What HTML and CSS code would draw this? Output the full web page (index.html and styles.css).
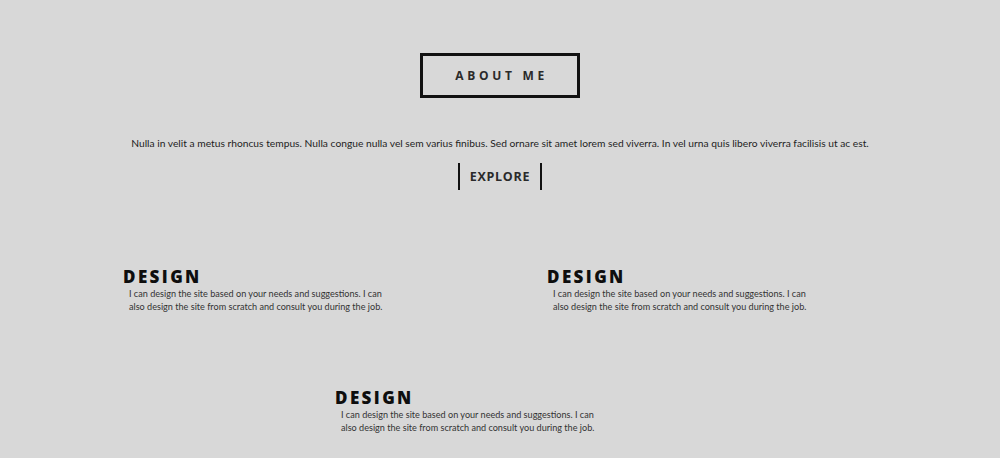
FILE: index.html
```html
<!DOCTYPE html>
<html>
<head>
<meta charset="utf-8">
<link rel="stylesheet" href="styles.css">
</head>
<body>
<section class="about">
  <h1 class="title">ABOUT ME</h1>
  <p class="intro">Nulla in velit a metus rhoncus tempus. Nulla congue nulla vel sem varius finibus. Sed ornare sit amet lorem sed viverra. In vel urna quis libero viverra facilisis ut ac est.</p>
  <a class="explore">EXPLORE</a>
</section>
<section class="services">
  <div class="service">
    <h2>DESIGN</h2>
    <p>I can design the site based on your needs and suggestions. I can also design the site from scratch and consult you during the job.</p>
  </div>
  <div class="service">
    <h2>DESIGN</h2>
    <p>I can design the site based on your needs and suggestions. I can also design the site from scratch and consult you during the job.</p>
  </div>
  <div class="service">
    <h2>DESIGN</h2>
    <p>I can design the site based on your needs and suggestions. I can also design the site from scratch and consult you during the job.</p>
  </div>
</section>
</body>
</html>
```
FILE: styles.css
```css
html, body {
  margin: 0;
  padding: 0;
  background: #d8d8d8;
  height: 100%;
}
body {
  font-family: "Open Sans", "Liberation Sans", sans-serif;
  color: #222;
  overflow: hidden;
}
.about {
  display: flex;
  flex-direction: column;
  align-items: center;
  padding-top: 53px;
}
.title {
  margin: 0;
  width: 151px;
  height: 39px;
  box-sizing: content-box;
  border: 3px solid #111;
  display: flex;
  align-items: center;
  justify-content: center;
  font-size: 12px;
  font-weight: 700;
  letter-spacing: 3.7px;
  padding-left: 3px;
  color: #2a2a2a;
}
.intro {
  margin: 37px 0 0;
  font-family: Lato, "Open Sans", sans-serif;
  font-size: 10.25px;
  line-height: 16px;
  color: #1e1e1e;
}
.explore {
  margin-top: 12px;
  height: 27px;
  width: 80px;
  border-left: 2px solid #111;
  border-right: 2px solid #111;
  display: flex;
  align-items: center;
  justify-content: center;
  font-size: 12.5px;
  font-weight: 700;
  letter-spacing: 0.7px;
  color: #2a2a2a;
}
.services {
  display: flex;
  flex-wrap: wrap;
  justify-content: center;
  margin-top: 77px;
  row-gap: 75px;
}
.service {
  width: 330px;
  margin: 0 47px;
}
.service h2 {
  margin: 0;
  font-size: 17px;
  line-height: 20px;
  font-weight: 800;
  letter-spacing: 2.4px;
  color: #0e0e0e;
}
.service p {
  margin: 0 0 0 6px;
  width: 258px;
  font-family: Lato, "Open Sans", sans-serif;
  font-size: 9.1px;
  line-height: 13px;
  color: #333;
}
```
